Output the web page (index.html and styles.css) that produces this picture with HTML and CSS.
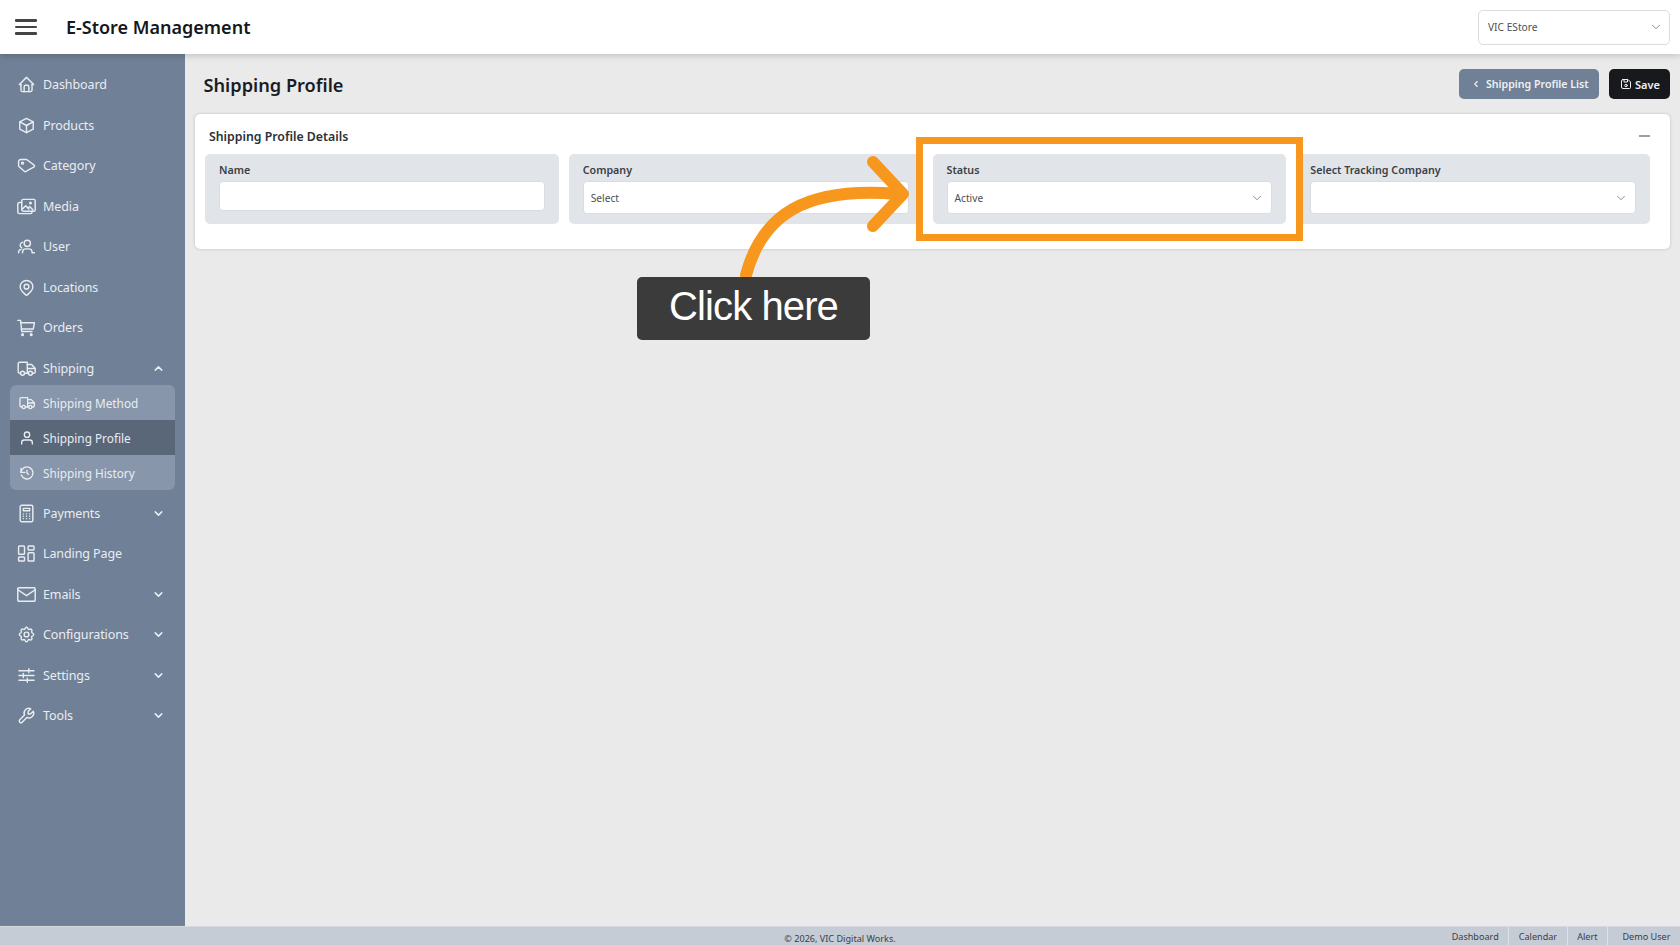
FILE: index.html
```html
<!DOCTYPE html>
<html lang="en">
<head>
<meta charset="utf-8">
<title>E-Store Management</title>
<link rel="stylesheet" href="styles.css">
</head>
<body>
<svg class="defs" width="0" height="0" aria-hidden="true">
  <symbol id="i-home" viewBox="0 0 24 24"><path d="M5 12H3l9-9 9 9h-2"/><path d="M5 12v7a2 2 0 0 0 2 2h10a2 2 0 0 0 2-2v-7"/><path d="M9 21v-6a2 2 0 0 1 2-2h2a2 2 0 0 1 2 2v6"/></symbol>
  <symbol id="i-box" viewBox="0 0 24 24"><path d="M12 3l8.500 4.500v9L12 21l-8.500-4.500v-9z"/><path d="M12 12l8.500-4.500"/><path d="M12 12v9"/><path d="M12 12L3.500 7.500"/></symbol>
  <symbol id="i-tag" viewBox="0 0 24 24"><path d="M2 7v5a2 2 0 0 0 .8 1.500l6.400 5.700a2 2 0 0 0 2.600 0l9.400-5.200a1.500 1.500 0 0 0 0-2.800L13 5a3 3 0 0 0-1.500-.5H4.500A2.500 2.500 0 0 0 2 7z"/><circle cx="7" cy="9" r="1.300"/></symbol>
  <symbol id="i-media" viewBox="0 0 24 24"><rect x="6" y="3" width="17" height="15" rx="2"/><path d="M6 7H3a2 2 0 0 0-2 2v10a2 2 0 0 0 2 2h14a2 2 0 0 0 2-2v-1"/><path d="M7 15l4-4 4 4"/><path d="M14 14l2-2 4 4"/><circle cx="17" cy="7.500" r="1"/></symbol>
  <symbol id="i-users" viewBox="0 0 24 24"><circle cx="13" cy="8" r="4"/><path d="M7 20v-1a4 4 0 0 1 4-4h4a4 4 0 0 1 4 4v1h3"/><path d="M7 6.500a4 4 0 0 0-1 7.300"/><path d="M2 20v-.5A4 4 0 0 1 5 15.700"/></symbol>
  <symbol id="i-pin" viewBox="0 0 24 24"><circle cx="12" cy="11" r="3"/><path d="M17.700 16.700L13.400 21a2 2 0 0 1-2.800 0l-4.300-4.300a8 8 0 1 1 11.400 0z"/></symbol>
  <symbol id="i-cart" viewBox="0 0 24 24"><circle cx="7" cy="21" r="1"/><circle cx="18" cy="21" r="1"/><path d="M1 3h3.500L6 17h13"/><path d="M4.500 6H22l-1.500 8H5.500"/></symbol>
  <symbol id="i-truck" viewBox="0 0 24 24"><circle cx="7" cy="18" r="2.500"/><circle cx="17" cy="18" r="2.500"/><path d="M4.500 18H3.500a2 2 0 0 1-2-2V6a2 2 0 0 1 2-2H13v14H9.500"/><path d="M13 7h5.500L23 12v4a2 2 0 0 1-2 2h-1.500"/><path d="M14 12h9"/><path d="M14.500 18H13"/></symbol>
  <symbol id="i-user" viewBox="0 0 24 24"><circle cx="12" cy="7" r="4"/><path d="M4 21v-2a4 4 0 0 1 4-4h8a4 4 0 0 1 4 4v2"/></symbol>
  <symbol id="i-history" viewBox="0 0 24 24"><path d="M12 8v4l2 2"/><path d="M3 11a9 9 0 1 1 .5 4"/><path d="M3 5v6h6"/></symbol>
  <symbol id="i-calc" viewBox="0 0 24 24"><rect x="4" y="1.500" width="16" height="21" rx="2"/><rect x="8" y="5.500" width="8" height="3"/><path d="M8 12.500h.01M12 12.500h.01M16 12.500h.01M8 15.500h.01M12 15.500h.01M16 15.500h.01M8 18.500h.01M12 18.500h.01M16 18.500h.01"/></symbol>
  <symbol id="i-layout" viewBox="0 0 24 24"><rect x="2" y="2.500" width="7.500" height="10.500" rx="1"/><rect x="2" y="16.500" width="7.500" height="5" rx="1"/><rect x="14" y="2.500" width="7.500" height="5" rx="1"/><rect x="14" y="11" width="7.500" height="10.500" rx="1"/></symbol>
  <symbol id="i-mail" viewBox="0 0 24 24"><rect x="1" y="3.500" width="22" height="17" rx="1.500"/><path d="M1 6l11 7.500L23 6"/></symbol>
  <symbol id="i-gear" viewBox="0 0 24 24"><circle cx="12" cy="12" r="3"/><path d="M10.300 4.300c.4-1.800 3-1.800 3.400 0a1.700 1.700 0 0 0 2.600 1.100c1.500-.9 3.300.8 2.400 2.400a1.700 1.700 0 0 0 1 2.500c1.800.4 1.800 3 0 3.400a1.700 1.700 0 0 0-1 2.600c.9 1.500-.9 3.300-2.400 2.400a1.700 1.700 0 0 0-2.600 1c-.4 1.800-3 1.800-3.400 0a1.700 1.700 0 0 0-2.600-1c-1.500.9-3.300-.9-2.400-2.400a1.700 1.700 0 0 0-1-2.600c-1.800-.4-1.800-3 0-3.400a1.700 1.700 0 0 0 1-2.500c-.9-1.600.9-3.300 2.400-2.400a1.700 1.700 0 0 0 2.600-1.100z"/></symbol>
  <symbol id="i-sliders" viewBox="0 0 24 24"><path d="M2.500 6h19M2.500 12h19M2.500 18h19"/><path d="M15 3.500v5M8 9.500v5M13 15.500v5"/></symbol>
  <symbol id="i-tool" viewBox="0 0 24 24"><path d="M7 10h3V7L6.500 3.500a6 6 0 0 1 8 8l6 6a2 2 0 0 1-3 3l-6-6a6 6 0 0 1-8-8z" transform="rotate(90 12 12)"/></symbol>
  <symbol id="i-chev-d" viewBox="0 0 24 24"><path d="M6 9l6 6 6-6"/></symbol>
  <symbol id="i-chev-u" viewBox="0 0 24 24"><path d="M6 15l6-6 6 6"/></symbol>
  <symbol id="i-chev-l" viewBox="0 0 24 24"><path d="M15 6l-6 6 6 6"/></symbol>
  <symbol id="i-save" viewBox="0 0 24 24"><path d="M6 3h10l5 5v11a2 2 0 0 1-2 2H6a3 3 0 0 1-3-3V6a3 3 0 0 1 3-3z"/><circle cx="12" cy="15" r="2.500"/><path d="M15 3v5H8V3"/></symbol>
</svg>

<header class="topbar">
  <div class="burger"><span></span><span></span><span></span></div>
  <div class="brand">E-Store Management</div>
  <div class="store-select"><span>VIC EStore</span><svg class="chev-grey"><use href="#i-chev-d"/></svg></div>
</header>

<div class="shell">
  <nav class="sidebar">
    <a class="nav-item"><svg class="ico"><use href="#i-home"/></svg><span>Dashboard</span></a>
    <a class="nav-item"><svg class="ico"><use href="#i-box"/></svg><span>Products</span></a>
    <a class="nav-item"><svg class="ico"><use href="#i-tag"/></svg><span>Category</span></a>
    <a class="nav-item"><svg class="ico"><use href="#i-media"/></svg><span>Media</span></a>
    <a class="nav-item"><svg class="ico"><use href="#i-users"/></svg><span>User</span></a>
    <a class="nav-item"><svg class="ico"><use href="#i-pin"/></svg><span>Locations</span></a>
    <a class="nav-item"><svg class="ico"><use href="#i-cart"/></svg><span>Orders</span></a>
    <a class="nav-item nav-open"><svg class="ico"><use href="#i-truck"/></svg><span>Shipping</span><svg class="chev"><use href="#i-chev-u"/></svg></a>
    <div class="submenu">
      <a class="sub-item"><svg class="sub-ico"><use href="#i-truck"/></svg><span>Shipping Method</span></a>
      <a class="sub-item sub-active"><svg class="sub-ico"><use href="#i-user"/></svg><span>Shipping Profile</span></a>
      <a class="sub-item"><svg class="sub-ico"><use href="#i-history"/></svg><span>Shipping History</span></a>
    </div>
    <a class="nav-item"><svg class="ico"><use href="#i-calc"/></svg><span>Payments</span><svg class="chev"><use href="#i-chev-d"/></svg></a>
    <a class="nav-item"><svg class="ico"><use href="#i-layout"/></svg><span>Landing Page</span></a>
    <a class="nav-item"><svg class="ico"><use href="#i-mail"/></svg><span>Emails</span><svg class="chev"><use href="#i-chev-d"/></svg></a>
    <a class="nav-item"><svg class="ico"><use href="#i-gear"/></svg><span>Configurations</span><svg class="chev"><use href="#i-chev-d"/></svg></a>
    <a class="nav-item"><svg class="ico"><use href="#i-sliders"/></svg><span>Settings</span><svg class="chev"><use href="#i-chev-d"/></svg></a>
    <a class="nav-item"><svg class="ico"><use href="#i-tool"/></svg><span>Tools</span><svg class="chev"><use href="#i-chev-d"/></svg></a>
  </nav>

  <main class="content">
    <div class="page-head">
      <h1>Shipping Profile</h1>
      <div class="actions">
        <button class="btn btn-list"><svg class="btn-chev"><use href="#i-chev-l"/></svg>Shipping Profile List</button>
        <button class="btn btn-save"><svg class="btn-ico"><use href="#i-save"/></svg>Save</button>
      </div>
    </div>
    <section class="card">
      <div class="card-head"><h2>Shipping Profile Details</h2><span class="collapse"></span></div>
      <div class="fields">
        <div class="field"><label>Name</label><div class="input"></div></div>
        <div class="field"><label>Company</label><div class="select"><span>Select</span><svg class="chev-grey"><use href="#i-chev-d"/></svg></div></div>
        <div class="field"><label>Status</label><div class="select"><span>Active</span><svg class="chev-grey"><use href="#i-chev-d"/></svg></div></div>
        <div class="field"><label>Select Tracking Company</label><div class="select"><span></span><svg class="chev-grey"><use href="#i-chev-d"/></svg></div></div>
      </div>
    </section>
  </main>
</div>

<footer class="footer">
  <span></span>
  <div class="copy">© 2026, VIC Digital Works.</div>
  <div class="foot-links"><a>Dashboard</a><a>Calendar</a><a>Alert</a><a>Demo User</a></div>
</footer>

<div class="callout-box"></div>
<svg class="callout-arrow" viewBox="0 0 1680 945">
  <path d="M746 275C762 215 805 186 898 194"/>
  <path d="M873 162L903 194L873 226"/>
</svg>
<div class="callout-label">Click here</div>
</body>
</html>
```
FILE: styles.css
```css
* { box-sizing: border-box; }
html, body { margin: 0; height: 100%; }
body {
  display: flex;
  flex-direction: column;
  height: 945px;
  overflow: hidden;
  background: #eaeaea;
  color: #212529;
  font-family: "Noto Sans", "Open Sans", sans-serif;
  font-size: 13px;
}
.defs { position: absolute; }
svg { fill: none; stroke: currentColor; stroke-linecap: round; stroke-linejoin: round; stroke-width: 1.8; }

.topbar {
  position: relative;
  z-index: 2;
  flex: 0 0 54px;
  display: flex;
  align-items: center;
  background: #fff;
  box-shadow: 0 2px 6px rgba(0, 0, 0, .16);
  padding: 0 10px 0 15px;
}
.burger { width: 22px; display: flex; flex-direction: column; gap: 4.4px; }
.burger span { height: 2.2px; background: #444; border-radius: 1px; }
.brand { margin-left: 29px; margin-bottom: 1px; font-size: 18px; font-weight: 600; color: #16181b; flex: 1; }
.store-select {
  width: 192px;
  height: 35px;
  display: flex;
  align-items: center;
  justify-content: space-between;
  padding: 0 6px 0 9px;
  border: 1px solid #d9dde2;
  border-radius: 5px;
  font-size: 10.2px;
  color: #4a4f55;
}
.chev-grey { width: 14px; height: 14px; color: #777e87; stroke-width: 1.5; }

.shell { flex: 1; display: flex; min-height: 0; }
.sidebar {
  flex: 0 0 184.5px;
  background: #708096;
  color: #e9edf1;
  padding: 10.500px 0 0 0;
  font-size: 12.5px;
  letter-spacing: -.1px;
}
.nav-item {
  height: 40.5px;
  display: flex;
  align-items: center;
  padding: 0 17px;
  gap: 7px;
}
.nav-item span { flex: 1; }
.ico { width: 19px; height: 19px; flex: none; }
.chev { width: 13px; height: 13px; stroke-width: 2.8; flex: none; margin-right: 3px; }
.nav-open { height: 40px; }
.submenu {
  margin: -3px 9.500px 3px 10px;
  border-radius: 6px;
  overflow: hidden;
  background: #8796aa;
  font-size: 11.8px;
  letter-spacing: 0;
}
.sub-item {
  height: 35px;
  display: flex;
  align-items: center;
  padding-left: 9px;
  gap: 8px;
}
.sub-active { background: #5a6779; }
.sub-ico { width: 16px; height: 16px; flex: none; stroke-width: 2; }

.content { flex: 1; padding: 8px 10px 0 10.5px; min-width: 0; }
.page-head { height: 52px; display: flex; align-items: flex-start; justify-content: space-between; padding: 0 0 0 8.5px; }
h1 { margin: 10px 0 0; font-size: 18.2px; line-height: 26px; font-weight: 600; color: #1a1c1f; }
.actions { display: flex; gap: 10px; margin-top: 7px; }
.btn {
  height: 30px;
  border: 0;
  border-radius: 5px;
  display: flex;
  align-items: center;
  padding-bottom: 1px;
  font-family: inherit;
  font-size: 10.6px;
  font-weight: 600;
  color: #eef1f4;
}
.btn-list { width: 140px; background: #708096; padding-left: 12px; padding-right: 0; gap: 5px; }
.btn-save { width: 61px; background: #17191d; padding-left: 11px; padding-right: 0; gap: 3px; font-size: 11px; }
.btn-chev { width: 10px; height: 10px; stroke-width: 2.8; }
.btn-ico { width: 12px; height: 12px; stroke-width: 2; }

.card {
  height: 135px;
  background: #fff;
  border-radius: 5px;
  box-shadow: 0 0 3px rgba(90, 100, 120, .35);
  padding: 0 20px 0 10px;
}
.card-head { height: 40px; display: flex; align-items: center; justify-content: space-between; padding: 4px 0 0 4px; }
h2 { margin: 0; font-size: 12.3px; font-weight: 600; color: #2c3036; }
.collapse { width: 11px; height: 1.5px; background: #9aa1aa; }
.fields { display: grid; grid-template-columns: repeat(4, 1fr); gap: 10px; }
.field { height: 70px; background: #e1e4e9; border-radius: 5px; padding: 9px 14px 0; }
label { display: block; font-size: 10.7px; font-weight: 600; color: #3a3f46; line-height: 15px; margin-bottom: 3px; }
.input { height: 30px; background: #fff; border: 1px solid #d9dde2; border-radius: 4px; }
.select {
  height: 33px;
  background: #fff;
  border: 1px solid #d9dde2;
  border-radius: 4px;
  display: flex;
  align-items: center;
  justify-content: space-between;
  padding: 0 7px;
  font-size: 10.2px;
  color: #4a4f55;
}

.footer {
  flex: 0 0 19.500px;
  display: grid;
  grid-template-columns: 1fr auto 1fr;
  grid-template-rows: 19px;
  overflow: hidden;
  background: #c5ccd6;
  border-top: 1px solid #d5dae1;
  font-size: 9.1px;
  color: #3b4046;
}
.copy { line-height: 23px; }
.foot-links { display: flex; justify-content: flex-end; }
.foot-links a { padding: 0 9.5px; line-height: 19px; border-left: 1px solid #dfe3e8; }
.foot-links a:first-child { border-left: 0; }
.foot-links a:last-child { padding-left: 14.5px; }

.callout-box {
  position: absolute;
  left: 915.5px;
  top: 137px;
  width: 387.5px;
  height: 104px;
  border: 7px solid #f7971e;
}
.callout-arrow {
  position: absolute;
  left: 0;
  top: 0;
  width: 1680px;
  height: 945px;
  stroke: #f7971e;
  stroke-width: 12;
}
.callout-label {
  position: absolute;
  left: 637px;
  top: 276.5px;
  width: 233px;
  height: 63.500px;
  background: rgba(48, 48, 48, .94);
  border-radius: 5px;
  color: #fff;
  font-family: "Liberation Sans", Arial, sans-serif;
  font-size: 40px;
  letter-spacing: -.9px;
  line-height: 58px;
  text-align: center;
}
```
